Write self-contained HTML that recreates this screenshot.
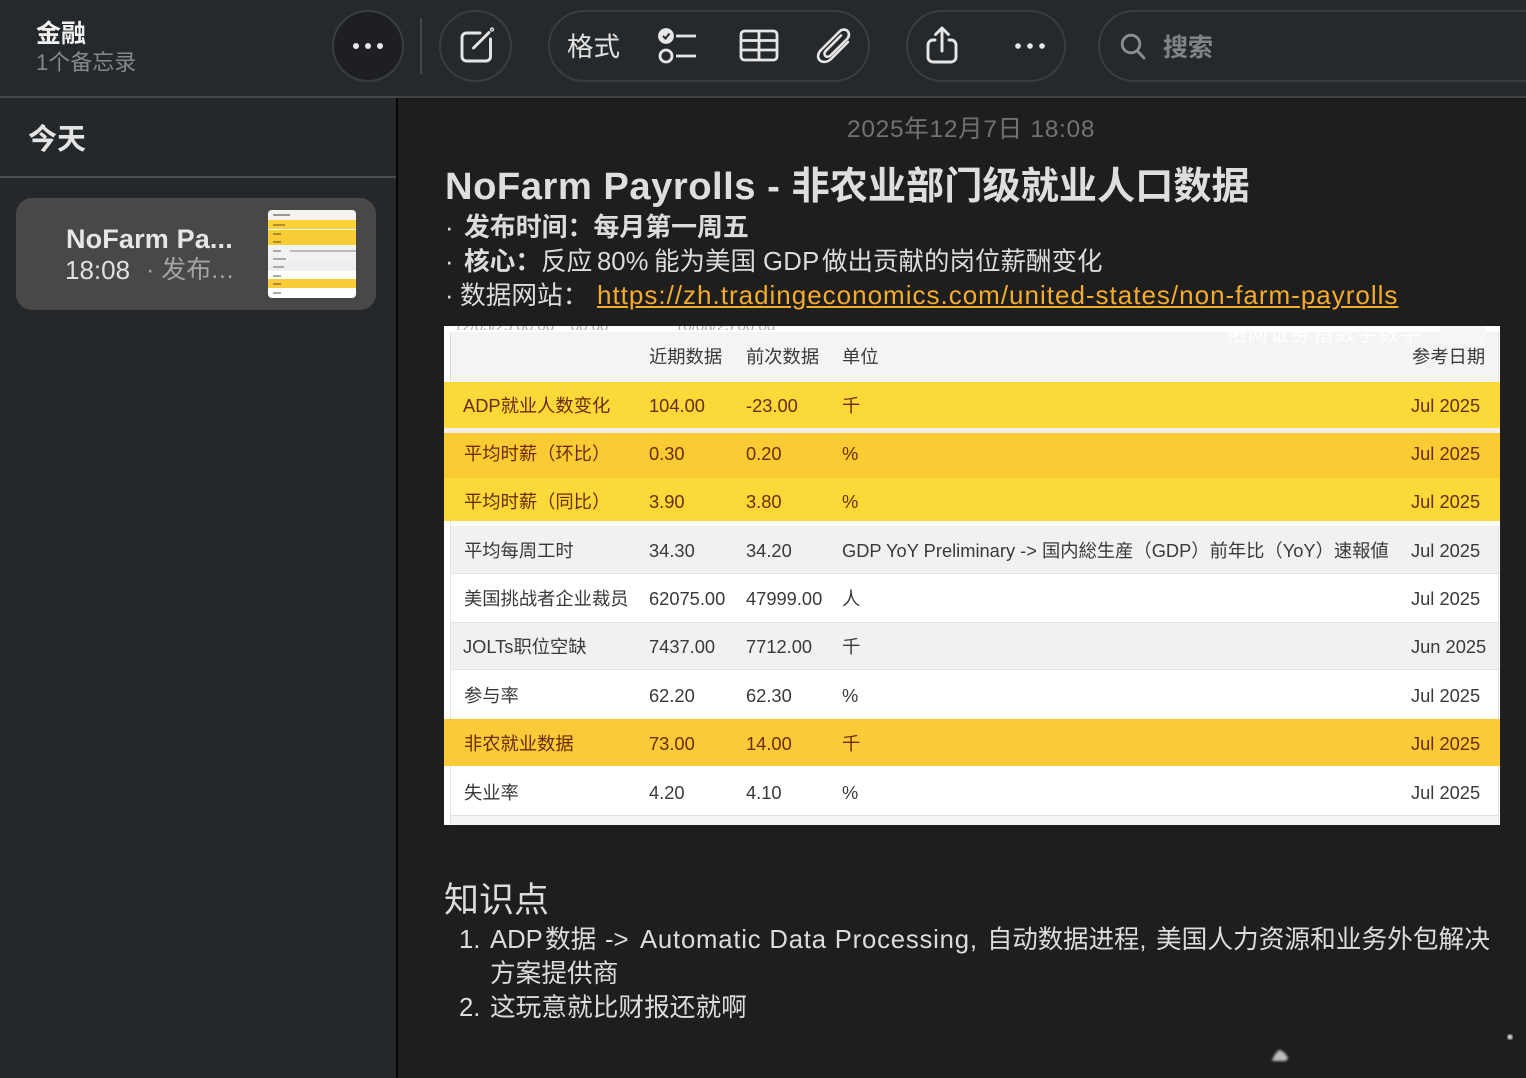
<!DOCTYPE html>
<html lang="zh"><head><meta charset="utf-8"><title>金融</title>
<style>
html,body{margin:0;padding:0;background:#1e1e1e}
#p{position:relative;width:1526px;height:1078px;overflow:hidden;background:#1e1e1e;font-family:"Liberation Sans","Noto Sans CJK SC",sans-serif;color:#dcdcdc}
#p div,#p svg{position:absolute}
.t{white-space:nowrap}
.pill{border:2px solid #3a3d40;box-sizing:border-box;background:#26292c}
.r{left:444px;width:1056px}
.g{left:451px;width:1047px}
.c{font-size:18.3px;line-height:24px;white-space:nowrap;color:#3a3a3a;margin-top:1px}
.y .c{color:#6b2c06}
.b{font-size:25.7px;line-height:34px;color:#dcdcdc;white-space:nowrap}
</style></head><body><div id="p">

<!-- toolbar -->
<div style="left:0;top:0;width:1526px;height:96px;background:#26292c"></div>
<div style="left:0;top:96px;width:1526px;height:2px;background:#424446"></div>
<div class="t" style="left:36px;top:17px;font-size:25px;line-height:34px;font-weight:700;color:#f0f0f0">金融</div>
<div class="t" style="left:36px;top:48px;font-size:22px;line-height:30px;color:#85888a">1个备忘录</div>
<div class="pill" style="left:332px;top:10px;width:72px;height:72px;border-radius:36px;background:#1e1f22"></div>
<svg style="left:350px;top:40px" width="36" height="12" fill="#e8e8e8"><circle cx="6" cy="6" r="3"/><circle cx="18" cy="6" r="3"/><circle cx="30" cy="6" r="3"/></svg>
<div style="left:420px;top:18px;width:2px;height:56px;background:#46494b"></div>
<div class="pill" style="left:439px;top:10px;width:73px;height:72px;border-radius:36px"></div>
<svg style="left:456px;top:26px" width="40" height="40" fill="none" stroke="#e6e6e6" stroke-width="2.9" stroke-linecap="round"><path d="M24 7H10.500a4.500 4.500 0 0 0-4.500 4.500v19A4.500 4.500 0 0 0 10.500 35H30a4.500 4.500 0 0 0 4.500-4.500V13"/><path d="M17.500 22 33 6.500"/><circle cx="36" cy="3.500" r=".7"/></svg>

<div class="pill" style="left:548px;top:10px;width:322px;height:72px;border-radius:36px"></div>
<div class="t" style="left:567px;top:29px;font-size:26.5px;line-height:36px;color:#e2e2e2">格式</div>
<svg style="left:656px;top:26px" width="44" height="40" fill="none" stroke="#e6e6e6" stroke-width="2.8"><circle cx="10" cy="10" r="6.500" fill="#e6e6e6"/><path d="M7 10l2.500 2.500L13.500 7.500" stroke="#26292c" stroke-width="2"/><circle cx="10" cy="30" r="6"/><path d="M20 10h20M20 30h20"/></svg>
<svg style="left:739px;top:29px" width="40" height="34" fill="none" stroke="#e6e6e6" stroke-width="2.8"><rect x="2" y="2" width="36" height="29" rx="3.500"/><path d="M2 11.500h36M2 21h36M20 2V31"/></svg>
<svg style="left:815px;top:26px" width="40" height="40" fill="none" stroke="#e6e6e6" stroke-width="2.6" stroke-linecap="round"><path d="M33 16 16 33c-3.500 3.500-9 3.800-11.500 1S3 27 6 24L24.500 5.500c2.500-2.500 6-2.500 8 -.5s2 5.500-.5 8L15.500 29.500c-1.500 1.500-4 1.700-5.200.4s-1.100-3.500.4-5L26 9.500"/></svg>

<div class="pill" style="left:906px;top:10px;width:160px;height:72px;border-radius:36px"></div>
<svg style="left:924px;top:24px" width="36" height="42" fill="none" stroke="#e6e6e6" stroke-width="2.9" stroke-linecap="round" stroke-linejoin="round"><path d="M18 27V4M11.500 10.500 18 4l6.500 6.500"/><path d="M11 16H9a5 5 0 0 0-5 5v12a5 5 0 0 0 5 5h18a5 5 0 0 0 5-5V21a5 5 0 0 0-5-5h-2"/></svg>
<svg style="left:1012px;top:40px" width="36" height="12" fill="#e8e8e8"><circle cx="6" cy="6" r="2.800"/><circle cx="18" cy="6" r="2.800"/><circle cx="30" cy="6" r="2.800"/></svg>

<div class="pill" style="left:1098px;top:10px;width:520px;height:72px;border-radius:36px"></div>
<svg style="left:1118px;top:31px" width="30" height="30" fill="none" stroke="#8b8d8f" stroke-width="2.8" stroke-linecap="round"><circle cx="13" cy="13" r="8.800"/><path d="M19.500 20l6.500 7"/></svg>
<div class="t" style="left:1163px;top:30px;font-size:25px;line-height:36px;font-weight:700;color:#818385">搜索</div>

<!-- sidebar -->
<div style="left:0;top:98px;width:396px;height:980px;background:#25282b"></div>
<div style="left:396px;top:98px;width:2px;height:980px;background:#050505"></div>
<div class="t" style="left:28px;top:120px;font-size:29px;line-height:40px;font-weight:700;color:#e4e4e4">今天</div>
<div style="left:0;top:176px;width:396px;height:2px;background:#4b4d4f"></div>
<div style="left:16px;top:198px;width:360px;height:112px;border-radius:16px;background:#484848"></div>
<div class="t" style="left:66px;top:223px;font-size:27px;line-height:33px;font-weight:700;color:#e6e6e6;letter-spacing:.15px">NoFarm Pa...</div>
<div class="t" style="left:65px;top:254px;font-size:26px;line-height:32px;color:#e0e0e0">18:08</div>
<div class="t" style="left:146px;top:254px;font-size:25px;line-height:32px;color:#a4a4a4">· 发布<span style="letter-spacing:.7px">...</span></div>
<div style="left:268px;top:210px;width:88px;height:88px;border-radius:4px;overflow:hidden;background:#fff">
  <div style="left:0;top:0;width:88px;height:10px;background:#f4f3ee"></div>
  <div style="left:0;top:10px;width:88px;height:9px;background:#fad136"></div>
  <div style="left:0;top:20px;width:88px;height:15px;background:#f8cc35"></div>
  <div style="left:0;top:36px;width:88px;height:16px;background:#f2f2f2"></div>
  <div style="left:0;top:52px;width:88px;height:9px;background:#efefef"></div>
  <div style="left:0;top:69px;width:88px;height:9px;background:#f8cb38"></div>
  <div style="left:5px;top:4px;width:17px;height:2px;background:#999"></div>
  <div style="left:5px;top:14px;width:12px;height:2px;background:#b48a30"></div>
  <div style="left:5px;top:23px;width:8px;height:2px;background:#b48a30"></div>
  <div style="left:5px;top:31px;width:8px;height:2px;background:#b48a30"></div>
  <div style="left:5px;top:40px;width:8px;height:2px;background:#aaa"></div>
  <div style="left:22px;top:40px;width:66px;height:2px;background:#bbb"></div>
  <div style="left:5px;top:48px;width:13px;height:2px;background:#aaa"></div>
  <div style="left:5px;top:56px;width:11px;height:2px;background:#aaa"></div>
  <div style="left:5px;top:65px;width:8px;height:2px;background:#aaa"></div>
  <div style="left:5px;top:73px;width:8px;height:2px;background:#b48a30"></div>
  <div style="left:5px;top:82px;width:8px;height:2px;background:#aaa"></div>
</div>

<!-- note -->
<div class="t" style="left:847px;top:114px;font-size:24.5px;line-height:32px;color:#727272;letter-spacing:.7px">2025年12月7日 18:08</div>
<div class="t" style="left:445px;top:164px;font-size:38.2px;line-height:46px;font-weight:700;color:#dedede"><span style="letter-spacing:.5px">NoFarm Payrolls - </span>非农业部门级就业人口数据</div>

<div class="b" style="left:445px;top:211px">·</div>
<div class="b" style="left:464px;top:211px;font-size:25.9px;font-weight:700">发布时间：每月第一周五</div>

<div class="b" style="left:445px;top:245px">·</div>
<div class="b" style="left:464px;top:245px;font-weight:700">核心：</div>
<div class="b" style="left:541px;top:245px">反应</div>
<div class="b" style="left:597px;top:245px">80%</div>
<div class="b" style="left:654px;top:245px;font-size:25.5px">能为美国</div>
<div class="b" style="left:763px;top:245px;letter-spacing:.3px">GDP</div>
<div class="b" style="left:822px;top:245px;font-size:25.5px">做出贡献的岗位薪酬变化</div>

<div class="b" style="left:445px;top:279px">·</div>
<div class="b" style="left:460px;top:279px">数据网站：</div>
<div class="t" style="left:597px;top:278px;font-size:26px;line-height:34px;color:#f5ab2c;text-decoration:underline;letter-spacing:1px">https://zh.tradingeconomics.com/united-states/non-farm-payrolls</div>

<!-- table image -->
<div style="left:444px;top:326px;width:1056px;height:499px;background:#fff;overflow:hidden"></div>
<div class="g" style="top:332px;height:50px;background:#f4f4f4"></div>
<div class="r y" style="top:382px;height:46px;background:#fbd938"></div>
<div class="r" style="top:428px;height:5px;background:#f2efe4"></div>
<div class="r y" style="top:433px;height:45px;background:#f9cc34"></div>
<div class="r y" style="top:478px;height:43px;background:#fbd938"></div>
<div class="g" style="top:526px;height:48px;background:#f1f1f1;border-bottom:1px solid #e2e2e2;box-sizing:border-box"></div>
<div class="g" style="top:622px;height:48px;background:#f1f1f1;border-top:1px solid #e2e2e2;border-bottom:1px solid #e2e2e2;box-sizing:border-box"></div>
<div class="r y" style="top:719px;height:47px;background:#f9cb38"></div>
<div class="g" style="top:815px;height:10px;background:#f4f4f4;border-top:1px solid #e2e2e2;box-sizing:border-box"></div>
<div style="left:450px;top:332px;width:1px;height:50px;background:#dcdcdc"></div>
<div style="left:450px;top:521px;width:1px;height:198px;background:#e4e4e4"></div>
<div style="left:450px;top:766px;width:1px;height:59px;background:#e4e4e4"></div>
<div style="left:1498px;top:332px;width:1px;height:50px;background:#e2e2e2"></div>
<div style="left:1498px;top:526px;width:1px;height:193px;background:#e2e2e2"></div>
<div style="left:1498px;top:766px;width:1px;height:59px;background:#e2e2e2"></div>
<div style="left:1440px;top:326px;width:46px;height:17px;background:#f7f7f7"></div>
<div class="t" style="left:1226px;top:326px;font-size:20px;line-height:18px;color:#fff;height:17px;overflow:hidden;letter-spacing:1.8px">拓网证券指数手数手</div>
<div class="t" style="left:454px;top:326px;height:4px;overflow:hidden;width:460px;font-size:15px;line-height:2px;color:#aaa">12/05/25 00:00 &nbsp;&nbsp; 00:00 &nbsp;&nbsp;&nbsp;&nbsp;&nbsp;&nbsp;&nbsp;&nbsp;&nbsp;&nbsp;&nbsp;&nbsp;&nbsp;&nbsp; 10/08/25 00:00</div>

<div class="c" style="left:649px;top:344px">近期数据</div><div class="c" style="left:746px;top:344px">前次数据</div><div class="c" style="left:842px;top:344px">单位</div><div class="c" style="left:1412px;top:344px">参考日期</div>

<div class="y">
<div class="c" style="left:463px;top:393px">ADP就业人数变化</div><div class="c" style="left:649px;top:393px">104.00</div><div class="c" style="left:746px;top:393px">-23.00</div><div class="c" style="left:842px;top:393px">千</div><div class="c" style="left:1411px;top:393px">Jul 2025</div>
<div class="c" style="left:464px;top:441px">平均时薪（环比）</div><div class="c" style="left:649px;top:441px">0.30</div><div class="c" style="left:746px;top:441px">0.20</div><div class="c" style="left:842px;top:441px">%</div><div class="c" style="left:1411px;top:441px">Jul 2025</div>
<div class="c" style="left:464px;top:489px">平均时薪（同比）</div><div class="c" style="left:649px;top:489px">3.90</div><div class="c" style="left:746px;top:489px">3.80</div><div class="c" style="left:842px;top:489px">%</div><div class="c" style="left:1411px;top:489px">Jul 2025</div>
<div class="c" style="left:464px;top:731px">非农就业数据</div><div class="c" style="left:649px;top:731px">73.00</div><div class="c" style="left:746px;top:731px">14.00</div><div class="c" style="left:842px;top:731px">千</div><div class="c" style="left:1411px;top:731px">Jul 2025</div>
</div>

<div class="c" style="left:464px;top:538px">平均每周工时</div><div class="c" style="left:649px;top:538px">34.30</div><div class="c" style="left:746px;top:538px">34.20</div><div class="c" style="left:842px;top:538px">GDP YoY Preliminary -&gt; 国内総生産（GDP）前年比（YoY）速報値</div><div class="c" style="left:1411px;top:538px">Jul 2025</div>
<div class="c" style="left:464px;top:586px">美国挑战者企业裁员</div><div class="c" style="left:649px;top:586px">62075.00</div><div class="c" style="left:746px;top:586px">47999.00</div><div class="c" style="left:842px;top:586px">人</div><div class="c" style="left:1411px;top:586px">Jul 2025</div>
<div class="c" style="left:463px;top:634px">JOLTs职位空缺</div><div class="c" style="left:649px;top:634px">7437.00</div><div class="c" style="left:746px;top:634px">7712.00</div><div class="c" style="left:842px;top:634px">千</div><div class="c" style="left:1411px;top:634px">Jun 2025</div>
<div class="c" style="left:464px;top:683px">参与率</div><div class="c" style="left:649px;top:683px">62.20</div><div class="c" style="left:746px;top:683px">62.30</div><div class="c" style="left:842px;top:683px">%</div><div class="c" style="left:1411px;top:683px">Jul 2025</div>
<div class="c" style="left:464px;top:780px">失业率</div><div class="c" style="left:649px;top:780px">4.20</div><div class="c" style="left:746px;top:780px">4.10</div><div class="c" style="left:842px;top:780px">%</div><div class="c" style="left:1411px;top:780px">Jul 2025</div>

<!-- knowledge -->
<div class="t" style="left:444px;top:878px;font-size:35px;line-height:46px;color:#dcdcdc">知识点</div>
<div class="b" style="left:459px;top:923px">1.</div>
<div class="b" style="left:490px;top:923px">ADP</div>
<div class="b" style="left:545px;top:923px">数据</div>
<div class="b" style="left:605px;top:923px">-&gt;</div>
<div class="b" style="left:640px;top:923px;letter-spacing:.8px">Automatic Data Processing,</div>
<div class="b" style="left:987px;top:923px;font-size:25.4px">自动数据进程,</div>
<div class="b" style="left:1156px;top:923px">美国人力资源和业务外包解决</div>
<div class="b" style="left:490px;top:957px">方案提供商</div>
<div class="b" style="left:459px;top:991px">2.</div>
<div class="b" style="left:490px;top:991px">这玩意就比财报还就啊</div>

<svg style="left:1265px;top:1042px" width="30" height="22"><defs><filter id="b"><feGaussianBlur stdDeviation="1.2"/></filter></defs><path d="M7 18Q12 8 15 8q5 2 8 8l-2 3H8z" fill="#bdbdbd" filter="url(#b)"/></svg>
<svg style="left:1500px;top:1030px" width="16" height="16"><defs><filter id="b2"><feGaussianBlur stdDeviation="1"/></filter></defs><circle cx="10" cy="7" r="2.5" fill="#eee" filter="url(#b2)"/></svg>
</div></body></html>
